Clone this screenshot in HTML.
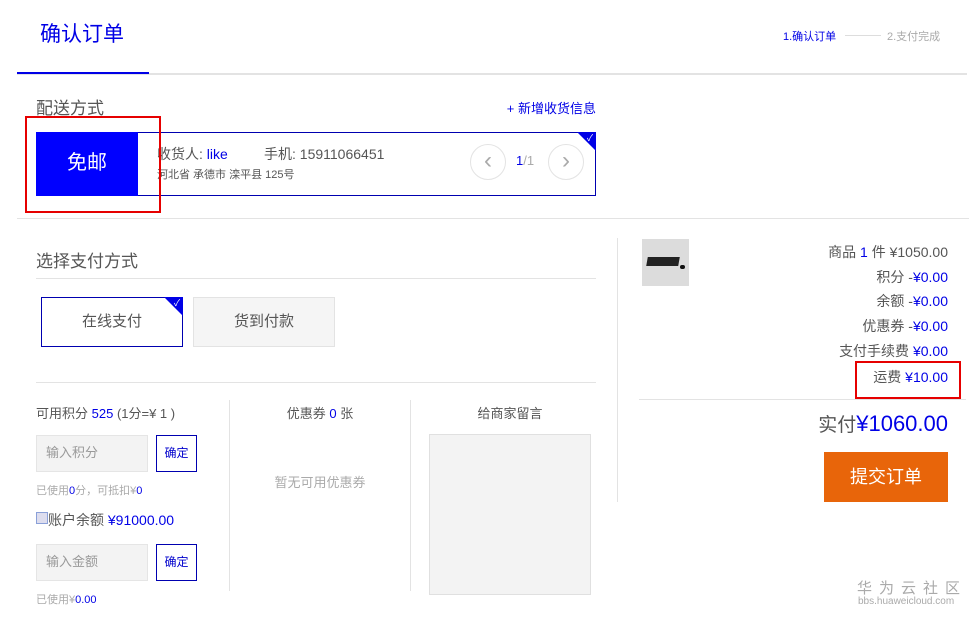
<!DOCTYPE html>
<html><head><meta charset="utf-8"><style>
*{margin:0;padding:0;box-sizing:border-box}
body{width:979px;height:617px;background:#fff;position:relative;overflow:hidden;font-family:"Liberation Sans","Noto Sans CJK SC",sans-serif;color:#555}
.a{position:absolute;white-space:nowrap}
.b{color:#0000e6}
.corner{position:absolute;right:-1px;top:-1px;width:0;height:0;border-top:19px solid #0000e6;border-left:19px solid transparent}
.ck{position:absolute;right:2px;top:0px;color:#fff;font-size:9px;line-height:10px}
.inp{position:absolute;background:#f3f3f3;border:1px solid #e5e5e5;font-size:13px;color:#999;padding-left:9px;line-height:34px}
.btn{position:absolute;border:1px solid #0000b0;color:#0000cc;font-size:12px;text-align:center;line-height:34px;background:#fff}
.row{position:absolute;right:31px;font-size:14px;line-height:18px;text-align:right;white-space:nowrap}
</style></head><body>
<div class="a b" style="left:40px;top:21px;font-size:21px;line-height:28px">确认订单</div>
<div class="a" style="left:17px;top:73px;width:950px;height:2px;background:#e3e3e3"></div>
<div class="a" style="left:17px;top:72px;width:132px;height:2px;background:#0000e6"></div>
<div class="a b" style="left:783px;top:28px;font-size:11px">1.确认订单</div>
<div class="a" style="left:845px;top:35px;width:36px;height:1px;background:#ddd"></div>
<div class="a" style="left:887px;top:28px;font-size:11px;color:#aaa">2.支付完成</div>

<div class="a" style="left:36px;top:94px;font-size:17px;color:#555">配送方式</div>
<div class="a b" style="right:383px;top:98px;font-size:13px">+ 新增收货信息</div>
<div class="a" style="left:36px;top:132px;width:560px;height:64px;border:1px solid #0000b0">
  <div class="corner"></div><div class="ck">✓</div>
  <div style="position:absolute;left:-1px;top:-1px;width:102px;height:64px;background:#0000ff;color:#fff;font-size:20px;text-align:center;line-height:62px">免邮</div>
  <div class="a" style="left:120px;top:11px;font-size:14px;color:#555">收货人: <span class="b">like</span></div>
  <div class="a" style="left:227px;top:11px;font-size:14px;color:#555">手机: 15911066451</div>
  <div class="a" style="left:120px;top:33px;font-size:11px;color:#555">河北省 承德市 滦平县 125号</div>
  <div class="a" style="left:433px;top:11px;width:36px;height:36px;border:1px solid #e3e3e3;border-radius:50%;text-align:center;line-height:32px;color:#aaa;font-size:24px">&lsaquo;</div>
  <div class="a" style="left:479px;top:20px;font-size:13px"><span class="b">1</span><span style="color:#aaa">/1</span></div>
  <div class="a" style="left:511px;top:11px;width:36px;height:36px;border:1px solid #e3e3e3;border-radius:50%;text-align:center;line-height:32px;color:#aaa;font-size:24px">&rsaquo;</div>
</div>
<div class="a" style="left:25px;top:116px;width:136px;height:97px;border:2px solid #e60000"></div>
<div class="a" style="left:17px;top:218px;width:952px;height:1px;background:#e3e3e3"></div>

<div class="a" style="left:36px;top:247px;font-size:17px;color:#555">选择支付方式</div>
<div class="a" style="left:36px;top:278px;width:560px;height:1px;background:#e3e3e3"></div>
<div class="a" style="left:41px;top:297px;width:142px;height:50px;border:1px solid #0000b0;text-align:center;line-height:48px;font-size:15px;color:#555"><div class="corner"></div><div class="ck">✓</div>在线支付</div>
<div class="a" style="left:193px;top:297px;width:142px;height:50px;border:1px solid #e3e3e3;background:#f5f5f5;text-align:center;line-height:48px;font-size:15px;color:#555">货到付款</div>
<div class="a" style="left:36px;top:382px;width:560px;height:1px;background:#e3e3e3"></div>

<div class="a" style="left:36px;top:403px;font-size:13px;color:#555">可用积分 <span class="b">525</span> (1分=¥ 1 )</div>
<div class="inp" style="left:36px;top:435px;width:112px;height:37px">输入积分</div>
<div class="btn" style="left:156px;top:435px;width:41px;height:37px">确定</div>
<div class="a" style="left:36px;top:482px;font-size:11px;color:#aaa">已使用<span class="b">0</span>分，可抵扣¥<span class="b">0</span></div>
<div class="a" style="left:36px;top:512px;width:12px;height:12px;border:1px solid #8aa0d8;background:#dde"></div>
<div class="a" style="left:48px;top:510px;font-size:14px;color:#555">账户余额 <span class="b">¥91000.00</span></div>
<div class="inp" style="left:36px;top:544px;width:112px;height:37px">输入金额</div>
<div class="btn" style="left:156px;top:544px;width:41px;height:37px">确定</div>
<div class="a" style="left:36px;top:591px;font-size:11px;color:#aaa">已使用¥<span class="b">0.00</span></div>

<div class="a" style="left:229px;top:400px;width:1px;height:191px;background:#e3e3e3"></div>
<div class="a" style="left:410px;top:400px;width:1px;height:191px;background:#e3e3e3"></div>
<div class="a" style="left:230px;top:403px;width:180px;text-align:center;font-size:13px;color:#555">优惠券 <span class="b">0</span> 张</div>
<div class="a" style="left:230px;top:472px;width:180px;text-align:center;font-size:13px;color:#aaa">暂无可用优惠券</div>
<div class="a" style="left:411px;top:403px;width:198px;text-align:center;font-size:13px;color:#555">给商家留言</div>
<div class="a" style="left:429px;top:434px;width:162px;height:161px;background:#f3f3f3;border:1px solid #e0e0e0"></div>

<div class="a" style="left:617px;top:238px;width:1px;height:264px;background:#e3e3e3"></div>
<div class="a" style="left:642px;top:239px;width:47px;height:47px;background:#dcdcdc"><div style="position:absolute;left:5px;top:18px;width:32px;height:9px;background:#222;transform:skewX(-10deg)"></div><div style="position:absolute;left:38px;top:26px;width:5px;height:4px;background:#111;border-radius:2px"></div></div>
<div class="row" style="top:243px">商品 <span class="b">1</span> 件 ¥1050.00</div>
<div class="row" style="top:268px">积分 -<span class="b">¥0.00</span></div>
<div class="row" style="top:292px">余额 -<span class="b">¥0.00</span></div>
<div class="row" style="top:317px">优惠券 -<span class="b">¥0.00</span></div>
<div class="row" style="top:342px">支付手续费 <span class="b">¥0.00</span></div>
<div class="row" style="top:368px">运费 <span class="b">¥10.00</span></div>
<div class="a" style="left:855px;top:361px;width:106px;height:38px;border:2px solid #e60000"></div>
<div class="a" style="left:639px;top:399px;width:327px;height:1px;background:#e3e3e3"></div>
<div class="row" style="top:410px;font-size:19px;line-height:28px">实付<span class="b" style="font-size:22px">¥1060.00</span></div>
<div class="a" style="left:824px;top:452px;width:124px;height:50px;background:#e8650a;color:#fff;font-size:18px;text-align:center;line-height:50px">提交订单</div>

<div class="a" style="left:857px;top:577px;font-size:15px;color:#aaa;letter-spacing:7px">华为云社区</div>
<div class="a" style="left:858px;top:596px;font-size:10px;color:#aaa">bbs.huaweicloud.com</div>
</body></html>
